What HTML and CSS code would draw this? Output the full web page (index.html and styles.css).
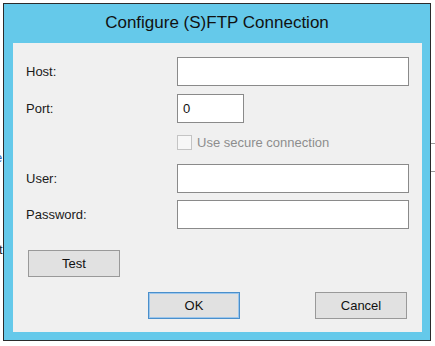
FILE: index.html
```html
<!DOCTYPE html>
<html>
<head>
<meta charset="utf-8">
<link rel="stylesheet" href="styles.css">
</head>
<body>
<div class="bg-frag frag-e">e</div>
<div class="bg-frag frag-t">t</div>
<div class="bg-line line-1"></div>
<div class="bg-line line-2"></div>
<div class="window">
  <div class="titlebar">Configure (S)FTP Connection</div>
  <div class="content">
    <div class="row row-host">
      <label class="label">Host:</label>
      <div class="field field-wide"></div>
    </div>
    <div class="row row-port">
      <label class="label">Port:</label>
      <div class="field field-port">0</div>
    </div>
    <div class="row row-check">
      <span class="label"></span>
      <span class="check"></span>
      <span class="check-text">Use secure connection</span>
    </div>
    <div class="row row-user">
      <label class="label">User:</label>
      <div class="field field-wide"></div>
    </div>
    <div class="row row-pass">
      <label class="label">Password:</label>
      <div class="field field-wide"></div>
    </div>
    <div class="row-test">
      <button class="btn">Test</button>
    </div>
    <div class="row-actions">
      <button class="btn btn-default">OK</button>
      <button class="btn">Cancel</button>
    </div>
  </div>
</div>
</body>
</html>
```
FILE: styles.css
```css
html, body {
  margin: 0;
  padding: 0;
  background: #ffffff;
  width: 435px;
  height: 346px;
  overflow: hidden;
  font-family: "Liberation Sans", Arial, sans-serif;
}
body {
  position: relative;
}
.bg-frag {
  position: absolute;
  font-size: 13px;
  line-height: 13px;
}
.frag-e {
  left: -5px;
  top: 151px;
  color: #2a6ab8;
}
.frag-t {
  left: -1px;
  top: 243px;
  color: #222;
}
.bg-line {
  position: absolute;
  left: 431px;
  width: 4px;
  height: 1px;
  background: #9a9a9a;
}
.line-1 { top: 143px; }
.line-2 { top: 171px; }

.window {
  position: relative;
  margin: 3px 0 0 3px;
  width: 426px;
  height: 336px;
  border: 1px solid #2b2b2b;
  background: #65c9ea;
  display: flex;
  flex-direction: column;
  padding: 0 8px 8px 9px;
  box-sizing: content-box;
  width: 409px;
  height: 328px;
}
.titlebar {
  height: 39px;
  display: flex;
  align-items: center;
  justify-content: center;
  font-size: 17px;
  color: #111;
  padding-right: 1px;
  padding-bottom: 1px;
  box-sizing: border-box;
}
.content {
  flex: 1;
  background: #f0f0f0;
  padding: 14px 0 0 0;
  display: flex;
  flex-direction: column;
  font-size: 13px;
  color: #1a1a1a;
}
.row {
  display: flex;
  align-items: center;
}
.label {
  width: 151px;
  padding-left: 13px;
  flex: none;
}
.field {
  height: 29px;
  box-sizing: border-box;
  border: 1px solid #8a8a8a;
  background: #ffffff;
  display: flex;
  align-items: center;
  padding-left: 5px;
  font-size: 13px;
  color: #111;
}
.field-wide {
  width: 232px;
}
.field-port {
  width: 67px;
}
.row-port {
  margin-top: 8px;
}
.row-check {
  margin-top: 12px;
  height: 15px;
}
.check {
  width: 15px;
  height: 15px;
  box-sizing: border-box;
  border: 1px solid #c4c4c4;
  background: #f7f7f7;
  flex: none;
}
.check-text {
  margin-left: 5px;
  color: #8d8d8d;
}
.row-user {
  margin-top: 14px;
}
.row-pass {
  margin-top: 7px;
}
.row-test {
  margin-top: 21px;
  padding-left: 15px;
  display: flex;
}
.row-actions {
  margin-top: 15px;
  display: flex;
  padding-left: 135px;
  gap: 75px;
}
.btn {
  width: 92px;
  height: 27px;
  box-sizing: border-box;
  border: 1px solid #999999;
  background: #e1e1e1;
  font-family: "Liberation Sans", Arial, sans-serif;
  font-size: 13px;
  color: #111;
  padding: 0;
  margin: 0;
}
.btn-default {
  border-color: #4a8fcb;
  box-shadow: inset 0 0 0 1px #9cc6ec;
}
```
